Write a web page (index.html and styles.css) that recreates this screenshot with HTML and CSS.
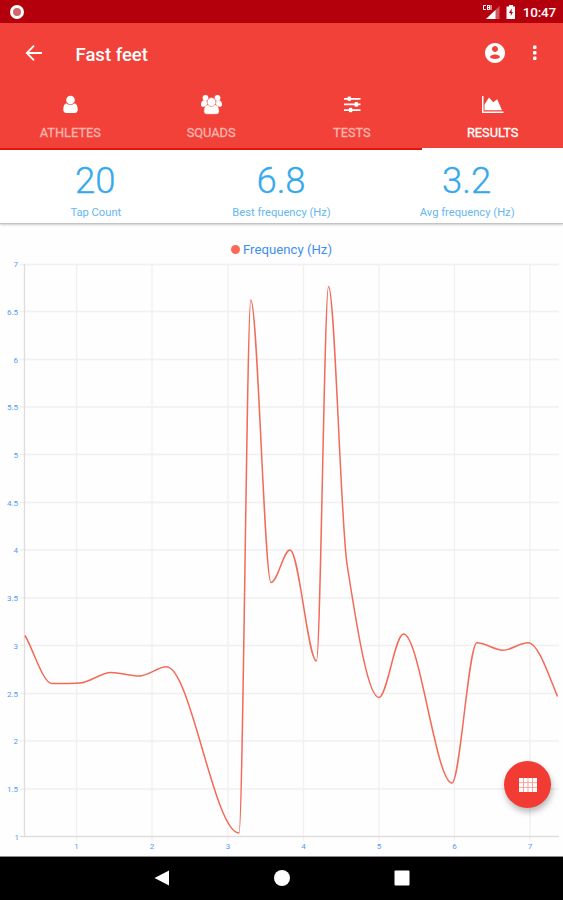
FILE: index.html
```html
<!DOCTYPE html>
<html lang="en">
    <head>
        <meta charset="UTF-8">
        <title>Fast feet</title>
        <link rel="stylesheet" href="styles.css">
    </head>
    <body>
        <div class="status-bar">
            <svg class="record" width="16" height="16" viewBox="0 0 16 16">
                <circle cx="8" cy="8" r="5.5" fill="#d2646e" stroke="#fff" stroke-width="3"/>
            </svg>
            <div class="status-icons">
                <svg width="18" height="16" viewBox="0 0 18 16" fill="#fff">
                    <path d="M4 1.5H1.5v4H4M5.5 1v5M5.5 1.5h2v4h-2M5.5 3.5h2M9 1v5" fill="none" stroke="#fff" stroke-width="1"/>
                    <path d="M17.5 2v13H4z" opacity=".35"/>
                    <path d="M13.5 6v9H4z"/>
                </svg>
                <svg width="10" height="14" viewBox="0 0 10 14">
                    <path d="M3 0h4v1.5h2V14H.5V1.5H3z" fill="#fff"/>
                    <path d="M5.6 3.500 3 8h1.800v3L7 7H5.600z" fill="#b4000d"/>
                </svg>
                <span class="clock">10:47</span>
            </div>
        </div>

        <header>
            <div class="toolbar">
                <svg width="24" height="24" viewBox="0 0 24 24" fill="none" stroke="#fff" stroke-width="1.8">
                    <path d="M20 12H5.5M12 4.7 4.8 12l7.2 7.3"/>
                </svg>
                <h1>Fast feet</h1>
                <svg class="account" width="24" height="24" viewBox="0 0 24 24" fill="#fff">
                    <path d="M12 2C6.480 2 2 6.480 2 12s4.480 10 10 10 10-4.480 10-10S17.520 2 12 2zm0 3c1.660 0 3 1.340 3 3s-1.340 3-3 3-3-1.340-3-3 1.340-3 3-3zm0 13c-2.500 0-4 -.7-5-1.700 0-2 3-2.900 5-2.900s5 .9 5 2.900c-1 1-2.500 1.700-5 1.700z"/>
                </svg>
                <svg class="more" width="6" height="18" viewBox="0 0 6 18" fill="#fff">
                    <rect x="1" y="1.500" width="3.500" height="3.500" rx="1"/>
                    <rect x="1" y="7" width="3.500" height="3.500" rx="1"/>
                    <rect x="1" y="12.500" width="3.500" height="3.500" rx="1"/>
                </svg>
            </div>
            <nav class="tabs">
                <div class="tab">
                    <svg width="24" height="20" viewBox="0 0 24 20" fill="#fff">
                        <circle cx="12.500" cy="5" r="4.300"/>
                        <path d="M8.500 8.200C6.300 8.800 5.300 11 5.300 14.500c0 2 1 3.500 3 3.500h8.400c2 0 3-1.500 3-3.500 0-3.500-1-5.700-3.200-6.300C15 10.200 10 10.200 8.500 8.200z"/>
                    </svg>
                    <span>ATHLETES</span>
                </div>
                <div class="tab">
                    <svg width="24" height="20" viewBox="0 0 24 20" fill="#fff">
                        <circle cx="6.500" cy="3" r="2.900"/>
                        <circle cx="18.500" cy="3" r="2.900"/>
                        <path d="M4 5.500C2.500 6 2 8 2 10c0 1 .8 1.800 2 1.800h3L9 8 7 5.500zM21 5.500c1.500.5 2 2.500 2 4.500 0 1-.8 1.800-2 1.800h-3L16 8l2-2.500z"/>
                        <g stroke="#f24139" stroke-width=".5">
                            <path d="M9 9.500C6.500 10 4.800 12.500 4.800 16c0 2 1 3.300 3 3.300h9.400c2 0 3-1.300 3-3.300 0-3.500-1.700-6-4.200-6.500z"/>
                            <circle cx="12.500" cy="7" r="4.400"/>
                        </g>
                    </svg>
                    <span>SQUADS</span>
                </div>
                <div class="tab">
                    <svg width="24" height="20" viewBox="0 0 24 20" fill="#fff">
                        <path d="M4 3h16.500v1.700H4zM4 8.600h16.500v1.700H4zM4 14.200h16.500v1.700H4z"/>
                        <rect x="7.500" y="1.500" width="3.600" height="4.600" rx="1.300"/>
                        <rect x="14.500" y="7.100" width="3.600" height="4.600" rx="1.300"/>
                        <rect x="8.800" y="12.700" width="3.600" height="4.600" rx="1.300"/>
                    </svg>
                    <span>TESTS</span>
                </div>
                <div class="tab active">
                    <svg width="24" height="20" viewBox="0 0 24 20" fill="#fff">
                        <path d="M1 1h1.500v15.500h20V18H1z"/>
                        <path d="M3.500 15.300V9.500L8 2.500l4.200 4.700 4-3 4.800 11.100z"/>
                    </svg>
                    <span>RESULTS</span>
                </div>
            </nav>
        </header>

        <section class="stats">
            <div class="stat"><b>20</b><span>Tap Count</span></div>
            <div class="stat"><b>6.8</b><span>Best frequency (Hz)</span></div>
            <div class="stat"><b>3.2</b><span>Avg frequency (Hz)</span></div>
        </section>

        <main>
            <div class="legend"><i class="dot"></i>Frequency (Hz)</div>
            <svg class="chart" width="563" height="592" viewBox="0 0 563 592">
                <!-- grid -->
                <g class="grid">
                    <path d="M20 0.500H559M20 47.500H559M20 95.500H559M20 143H559M20 190.500H559M20 238.500H559M20 286H559M20 334H559M20 381.500H559M20 429.500H559M20 477H559M20 525H559"/>
                    <path d="M76.500 0V577M152 0V577M228 0V577M303.500 0V577M379 0V577M454.500 0V577M530 0V577"/>
                </g>
                <path class="axis" d="M24.500 0V572.500M20 572.500H559"/>
                <!-- y labels -->
                <g class="label y">
                    <text x="18" y="3">7</text>
                    <text x="18" y="50.500">6.5</text>
                    <text x="18" y="98.500">6</text>
                    <text x="18" y="146">5.5</text>
                    <text x="18" y="193.500">5</text>
                    <text x="18" y="241.500">4.5</text>
                    <text x="18" y="289">4</text>
                    <text x="18" y="337">3.5</text>
                    <text x="18" y="384.500">3</text>
                    <text x="18" y="432.500">2.5</text>
                    <text x="18" y="480">2</text>
                    <text x="18" y="528">1.5</text>
                    <text x="19" y="575.500">1</text>
                </g>
                <!-- x labels -->
                <g class="label x">
                    <text x="76.500" y="585">1</text>
                    <text x="152" y="585">2</text>
                    <text x="228" y="585">3</text>
                    <text x="303.500" y="585">4</text>
                    <text x="379" y="585">5</text>
                    <text x="454.500" y="585">6</text>
                    <text x="530" y="585">7</text>
                </g>
                <path class="line" d="M25 371.500C34 387 43 419.500 52 419.500C61 419.500 71 419.500 80 419C90 418.500 101 408.500 111 408.500C120 408.500 130 412 139 412C148 412 158 402.800 166.500 402.800C190.500 402.800 214.500 569 239 569C243 569 247 36 250.800 36C257.500 36 264.500 318.500 271 318.500C277.500 318.500 283.500 286 290 286C299 286 308 397 316.500 397C320.500 397 324.500 22.500 328.500 22.500C334.700 22.500 340.800 260 347 300C357.700 369 368.300 433.500 379 433.500C387 433.500 395 370 403.500 370C419.500 370 436 519 452 519C460 519 468.500 378.800 477 378.800C485.500 378.800 494.500 386.200 503 386.200C511.500 386.200 519.500 378.800 528 378.800C538 378.800 547.500 408 557.500 432.500"/>
            </svg>
            <div class="fab">
                <svg width="18" height="14" viewBox="0 0 18 14">
                    <rect width="18" height="14" fill="#fff"/>
                    <path d="M0 4.700h18M0 9.300h18M4.500 0v14M9 0v14M13.500 0v14" stroke="#f6a39e" stroke-width="1"/>
                </svg>
            </div>
        </main>

        <footer class="nav-bar">
            <svg width="16" height="16" viewBox="0 0 16 16" fill="#fff"><path d="M15 .5v15L.5 8z"/></svg>
            <svg width="16" height="16" viewBox="0 0 16 16" fill="#fff"><circle cx="8" cy="8" r="8"/></svg>
            <svg width="16" height="16" viewBox="0 0 16 16" fill="#fff"><rect x=".5" y=".5" width="15" height="15" rx="1"/></svg>
        </footer>
    </body>
</html>
```
FILE: styles.css
```css
html, body {
    height: 100%;
}

body {
    margin: 0;
    display: flex;
    flex-direction: column;
    overflow: hidden;
    font-family: Roboto, "Liberation Sans", sans-serif;
    background: #fefefe;
}

svg {
    display: block;
}

.status-bar {
    height: 23px;
    flex: none;
    display: flex;
    align-items: center;
    justify-content: space-between;
    padding: 0 7px 0 9px;
    background: #b4000d;
    color: white;
}

.status-icons {
    display: flex;
    align-items: center;
    gap: 6.5px;
}

.clock {
    font-size: 13.5px;
    font-weight: 500;
    line-height: 23px;
    letter-spacing: -0.2px;
    padding-top: 1px;
}

header {
    height: 127px;
    flex: none;
    display: flex;
    flex-direction: column;
    box-sizing: border-box;
    background: #f24139;
    color: white;
}

.toolbar {
    height: 60px;
    display: flex;
    align-items: center;
    padding: 0 25px 0 22px;
}

h1 {
    margin: 3px auto 0 29.5px;
    font-size: 18.5px;
    font-weight: 500;
}

.account {
    margin-right: 25px;
}

.tabs {
    flex: 1;
    display: flex;
}

.tab {
    flex: 1;
    display: flex;
    flex-direction: column;
    align-items: center;
    gap: 10px;
    padding-top: 12px;
    font-size: 12.8px;
    line-height: 16px;
    color: #fbb5ae;
    border-bottom: 2px solid #df170f;
    box-sizing: border-box;
}

.tab span {
    -webkit-text-stroke: 0.3px;
}

.tab.active {
    color: white;
    border-bottom-color: white;
}

.stats {
    height: 74px;
    flex: none;
    display: flex;
    padding: 0 3px;
    box-sizing: border-box;
    background: white;
    border-bottom: 1px solid #c4c4c4;
    box-shadow: 0 1px 2px rgba(0, 0, 0, 0.2);
}

.stat {
    flex: 1;
    display: flex;
    flex-direction: column;
    align-items: center;
    color: #35a9ee;
}

.stat b {
    margin-top: 10px;
    margin-left: -1px;
    font-size: 36.5px;
    line-height: 42px;
    font-weight: 300;
    -webkit-text-stroke: 0.3px;
}

.stat span {
    margin-top: 4px;
    font-size: 11.2px;
    line-height: 14px;
    color: #65b7f0;
}

main {
    flex: 1;
    position: relative;
}

.legend {
    height: 40px;
    display: flex;
    align-items: center;
    justify-content: center;
    padding-top: 11px;
    box-sizing: border-box;
    font-size: 13.2px;
    line-height: 16px;
    color: #3d8ff0;
}

.dot {
    width: 9px;
    height: 9px;
    margin-right: 3px;
    border-radius: 50%;
    background: #fa6955;
}

.chart {
    overflow: visible;
}

.grid path {
    fill: none;
    stroke: #f0f0f0;
    stroke-width: 1.3;
}

.axis {
    fill: none;
    stroke: #dedede;
    stroke-width: 1.3;
}

.line {
    fill: none;
    stroke: #f26a58;
    stroke-width: 1.5;
}

.label {
    font-size: 8px;
    fill: #4f9cf5;
}

.label.y {
    text-anchor: end;
}

.label.x {
    text-anchor: middle;
}

.fab {
    position: absolute;
    right: 12px;
    bottom: 48px;
    width: 47px;
    height: 47px;
    display: flex;
    align-items: center;
    justify-content: center;
    border-radius: 50%;
    background: #f23b33;
    box-shadow: 1px 4px 6px rgba(0, 0, 0, 0.28);
}

.nav-bar {
    height: 45px;
    flex: none;
    display: flex;
    align-items: center;
    justify-content: center;
    gap: 104px;
    padding-bottom: 2px;
    box-sizing: border-box;
    border-top: 1px solid #8c8c8c;
    background: black;
}
```
